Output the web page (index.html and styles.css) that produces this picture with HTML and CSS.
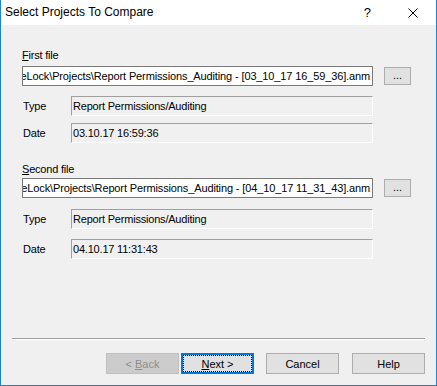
FILE: index.html
```html
<!DOCTYPE html>
<html>
<head>
<meta charset="utf-8">
<link rel="stylesheet" href="styles.css">
</head>
<body>
<div class="window">
  <div class="titlebar">
    <span class="title">Select Projects To Compare</span>
    <span class="help-glyph">?</span>
    <svg class="close" width="10" height="10" viewBox="0 0 10 10"><path d="M0.5 0.5 L9.5 9.5 M9.5 0.5 L0.5 9.5" stroke="#000" stroke-width="1" fill="none"/></svg>
  </div>
  <div class="content">
    <div class="group first">
      <div class="label"><u>F</u>irst file</div>
      <div class="file-row">
        <div class="input"><span>C:\Users\Public\Documents\SecureLock\Projects\Report Permissions_Auditing - [03_10_17 16_59_36].anm</span></div>
        <div class="btn browse"><span>...</span></div>
      </div>
      <div class="field-row type">
        <span class="field-label">Type</span>
        <div class="static">Report Permissions/Auditing</div>
      </div>
      <div class="field-row date">
        <span class="field-label">Date</span>
        <div class="static">03.10.17 16:59:36</div>
      </div>
    </div>
    <div class="group second">
      <div class="label"><u>S</u>econd file</div>
      <div class="file-row">
        <div class="input"><span>C:\Users\Public\Documents\SecureLock\Projects\Report Permissions_Auditing - [04_10_17 11_31_43].anm</span></div>
        <div class="btn browse"><span>...</span></div>
      </div>
      <div class="field-row type">
        <span class="field-label">Type</span>
        <div class="static">Report Permissions/Auditing</div>
      </div>
      <div class="field-row date">
        <span class="field-label">Date</span>
        <div class="static">04.10.17 11:31:43</div>
      </div>
    </div>
    <div class="footer">
      <div class="separator"></div>
      <div class="buttons">
        <div class="btn disabled"><span>&lt; <u>B</u>ack</span></div>
        <div class="btn default"><span><u>N</u>ext &gt;</span></div>
        <div class="btn cancel"><span>Cancel</span></div>
        <div class="btn helpbtn"><span>Help</span></div>
      </div>
    </div>
  </div>
</div>
</body>
</html>
```

FILE: styles.css
```css
* { box-sizing: border-box; }
html, body { margin: 0; padding: 0; }
body {
  font-family: "Liberation Sans", Arial, sans-serif;
  font-size: 11px;
  color: #000;
  background: #f0f0f0;
}
.window {
  width: 437px;
  height: 386px;
  border: 1px solid #1883d7;
  border-top: none;
  display: flex;
  flex-direction: column;
  background: #f0f0f0;
}
.titlebar {
  height: 25px;
  background: #fff;
  display: flex;
  align-items: center;
  padding-left: 4px;
  flex: none;
}
.title {
  font-size: 12px;
  flex: 1;
  padding-bottom: 1px;
}
.help-glyph {
  font-size: 13px;
  margin-right: 37px;
  padding-bottom: 1px;
}
.close {
  margin-right: 18px;
}
.content {
  flex: 1;
  display: flex;
  flex-direction: column;
  padding-left: 21px;
  letter-spacing: -0.2px;
}
.label {
  line-height: 13px;
  height: 13px;
}
.group.first .label { margin-top: 24px; }
.group.first .file-row { margin-top: 4px; }
.group.second .label { margin-top: 20px; }
.group.second .file-row { margin-top: 2px; }
.file-row {
  display: flex;
  align-items: center;
  height: 20px;
}
.input {
  width: 351px;
  height: 20px;
  border: 1px solid #7a7a7a;
  background: #fff;
  display: flex;
  justify-content: flex-end;
  align-items: center;
  overflow: hidden;
  white-space: nowrap;
  padding-right: 2px;
  letter-spacing: -0.13px;
}
.input span { flex: none; }
.btn {
  width: 73px;
  height: 21px;
  background: #e1e1e1;
  border: 1px solid #adadad;
  display: flex;
  align-items: center;
  justify-content: center;
  white-space: nowrap;
  letter-spacing: 0;
}
.browse {
  width: 27px;
  height: 18px;
  margin-left: 11px;
  padding-bottom: 3px;
}
.field-row {
  display: flex;
  align-items: center;
  height: 20px;
}
.field-label {
  width: 49px;
  padding-left: 1px;
}
.static {
  width: 302px;
  height: 20px;
  border: 1px solid #a0a0a0;
  border-right-color: #fff;
  border-bottom-color: #fff;
  padding-left: 1px;
  display: flex;
  align-items: center;
}
.group.first .type { margin-top: 10px; }
.group.first .date { margin-top: 7px; }
.group.second .type { margin-top: 11px; }
.group.second .date { margin-top: 10px; }
.footer {
  margin-top: auto;
  padding-right: 11px;
  padding-bottom: 11px;
  margin-left: -10px;
}
.separator {
  height: 2px;
  border-top: 1px solid #a0a0a0;
  border-bottom: 1px solid #fff;
}
.buttons {
  margin-top: 13px;
  display: flex;
  justify-content: flex-end;
}
.disabled {
  background: #cccccc;
  border-color: #bfbfbf;
  color: #8d8d8d;
}
.default {
  margin-left: 2px;
  border: 2px solid #0078d7;
  outline: 1px dotted #000;
  outline-offset: -3px;
}
.cancel { margin-left: 12px; }
.helpbtn { margin-left: 13px; }
```
